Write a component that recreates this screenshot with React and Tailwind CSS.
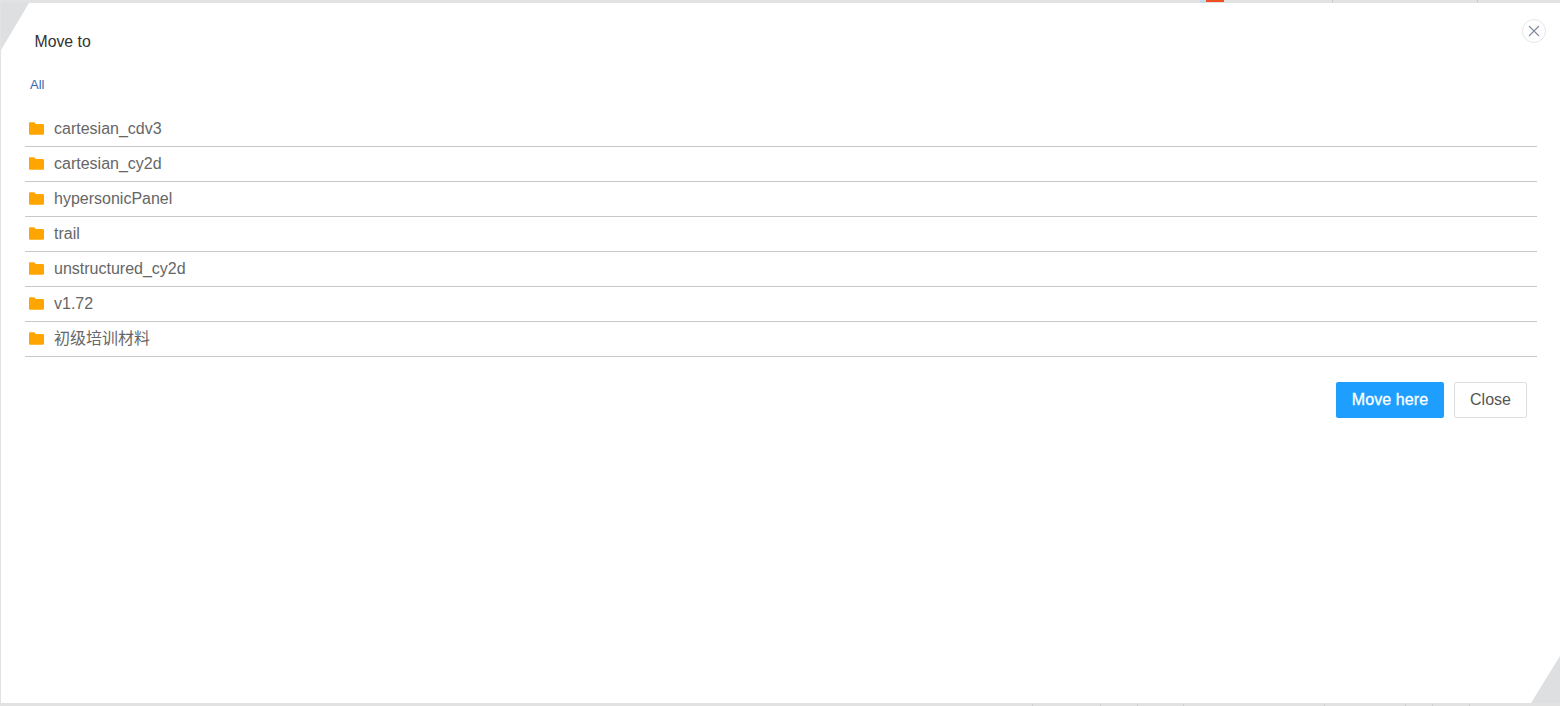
import React from 'react';

const folders = [
  'cartesian_cdv3',
  'cartesian_cy2d',
  'hypersonicPanel',
  'trail',
  'unstructured_cy2d',
  'v1.72',
  '初级培训材料',
];

// table column lines of the page behind the dialog, only their ends show
const topTicks = [1332, 1477];
const bottomTicks = [1032, 1100, 1137, 1183, 1324, 1405, 1432, 1469];

function FolderIcon() {
  return (
    <svg width="15" height="13" viewBox="0 0 15 13" className="relative -top-[1px] shrink-0">
      <path d="M1.2 0.3H5.2L6.8 2.1H13.6C14.4 2.1 15 2.7 15 3.5V11.4C15 12.2 14.4 12.8 13.6 12.8H1.4C0.6 12.8 0 12.2 0 11.4V1.5C0 0.8 0.5 0.3 1.2 0.3Z" fill="#ffa500" />
    </svg>
  );
}

export default function App() {
  return (
    <div className="relative h-[706px] w-[1560px] overflow-hidden bg-[#e2e2e2] pt-[3px] pb-[3px] pl-[1px] font-['Liberation_Sans','Noto_Sans_CJK_SC',sans-serif]">
      {/* background that shows behind the dialog */}
      <div className="absolute top-0 left-[1200px] h-[3px] w-[6px] bg-[#c9dcec]" />
      <div className="absolute top-0 left-[1206px] h-[2px] w-[18px] bg-[#f04e23]" />
      {topTicks.map((x) => (
        <div key={x} className="absolute top-0 h-[2px] w-px bg-[#c4c4c4]" style={{ left: x }} />
      ))}
      {bottomTicks.map((x) => (
        <div key={x} className="absolute bottom-0 h-[2px] w-px bg-[#cfcfcf]" style={{ left: x }} />
      ))}

      {/* cut corners */}
      <div className="relative h-[700px] bg-[#dedfe0]">
        <div className="relative flex h-full flex-col bg-white pl-6 pr-[23px] [clip-path:polygon(28px_0,100%_0,100%_653px,1530px_100%,0_100%,0_47px)]">
          <button className="absolute top-4 right-[14px] flex h-6 w-6 items-center justify-center rounded-full border border-[#e3e5e8] text-[#7f8b9c]">
            <svg width="12" height="12" viewBox="0 0 12 12" fill="none" stroke="currentColor" strokeWidth="1.1">
              <path d="M1 1L11 11M11 1L1 11" />
            </svg>
          </button>

          <div className="mt-[29px] ml-[9.5px] text-[15.8px] leading-[20px] text-[#333]">Move to</div>
          <div className="mt-[24px] ml-[5px] text-[13px] leading-[18px] text-[#3a66b0]">All</div>

          <ul className="mt-[18px]">
            {folders.map((name) => (
              <li key={name} className="flex h-[35px] items-center gap-[10px] border-b border-[#c8c8c8] pl-1">
                <FolderIcon />
                <span className="text-base text-[#666]">{name}</span>
              </li>
            ))}
          </ul>

          <div className="mt-[25px] flex justify-end gap-[10px] pr-[10px]">
            <button className="h-9 w-[108px] rounded-[2px] bg-[#1e9fff] text-base tracking-[0.1px] text-white [-webkit-text-stroke:0.3px_white]">Move here</button>
            <button className="h-9 w-[73px] rounded-[2px] border border-[#dedede] bg-white text-base text-[#555]">Close</button>
          </div>
        </div>
      </div>
    </div>
  );
}
